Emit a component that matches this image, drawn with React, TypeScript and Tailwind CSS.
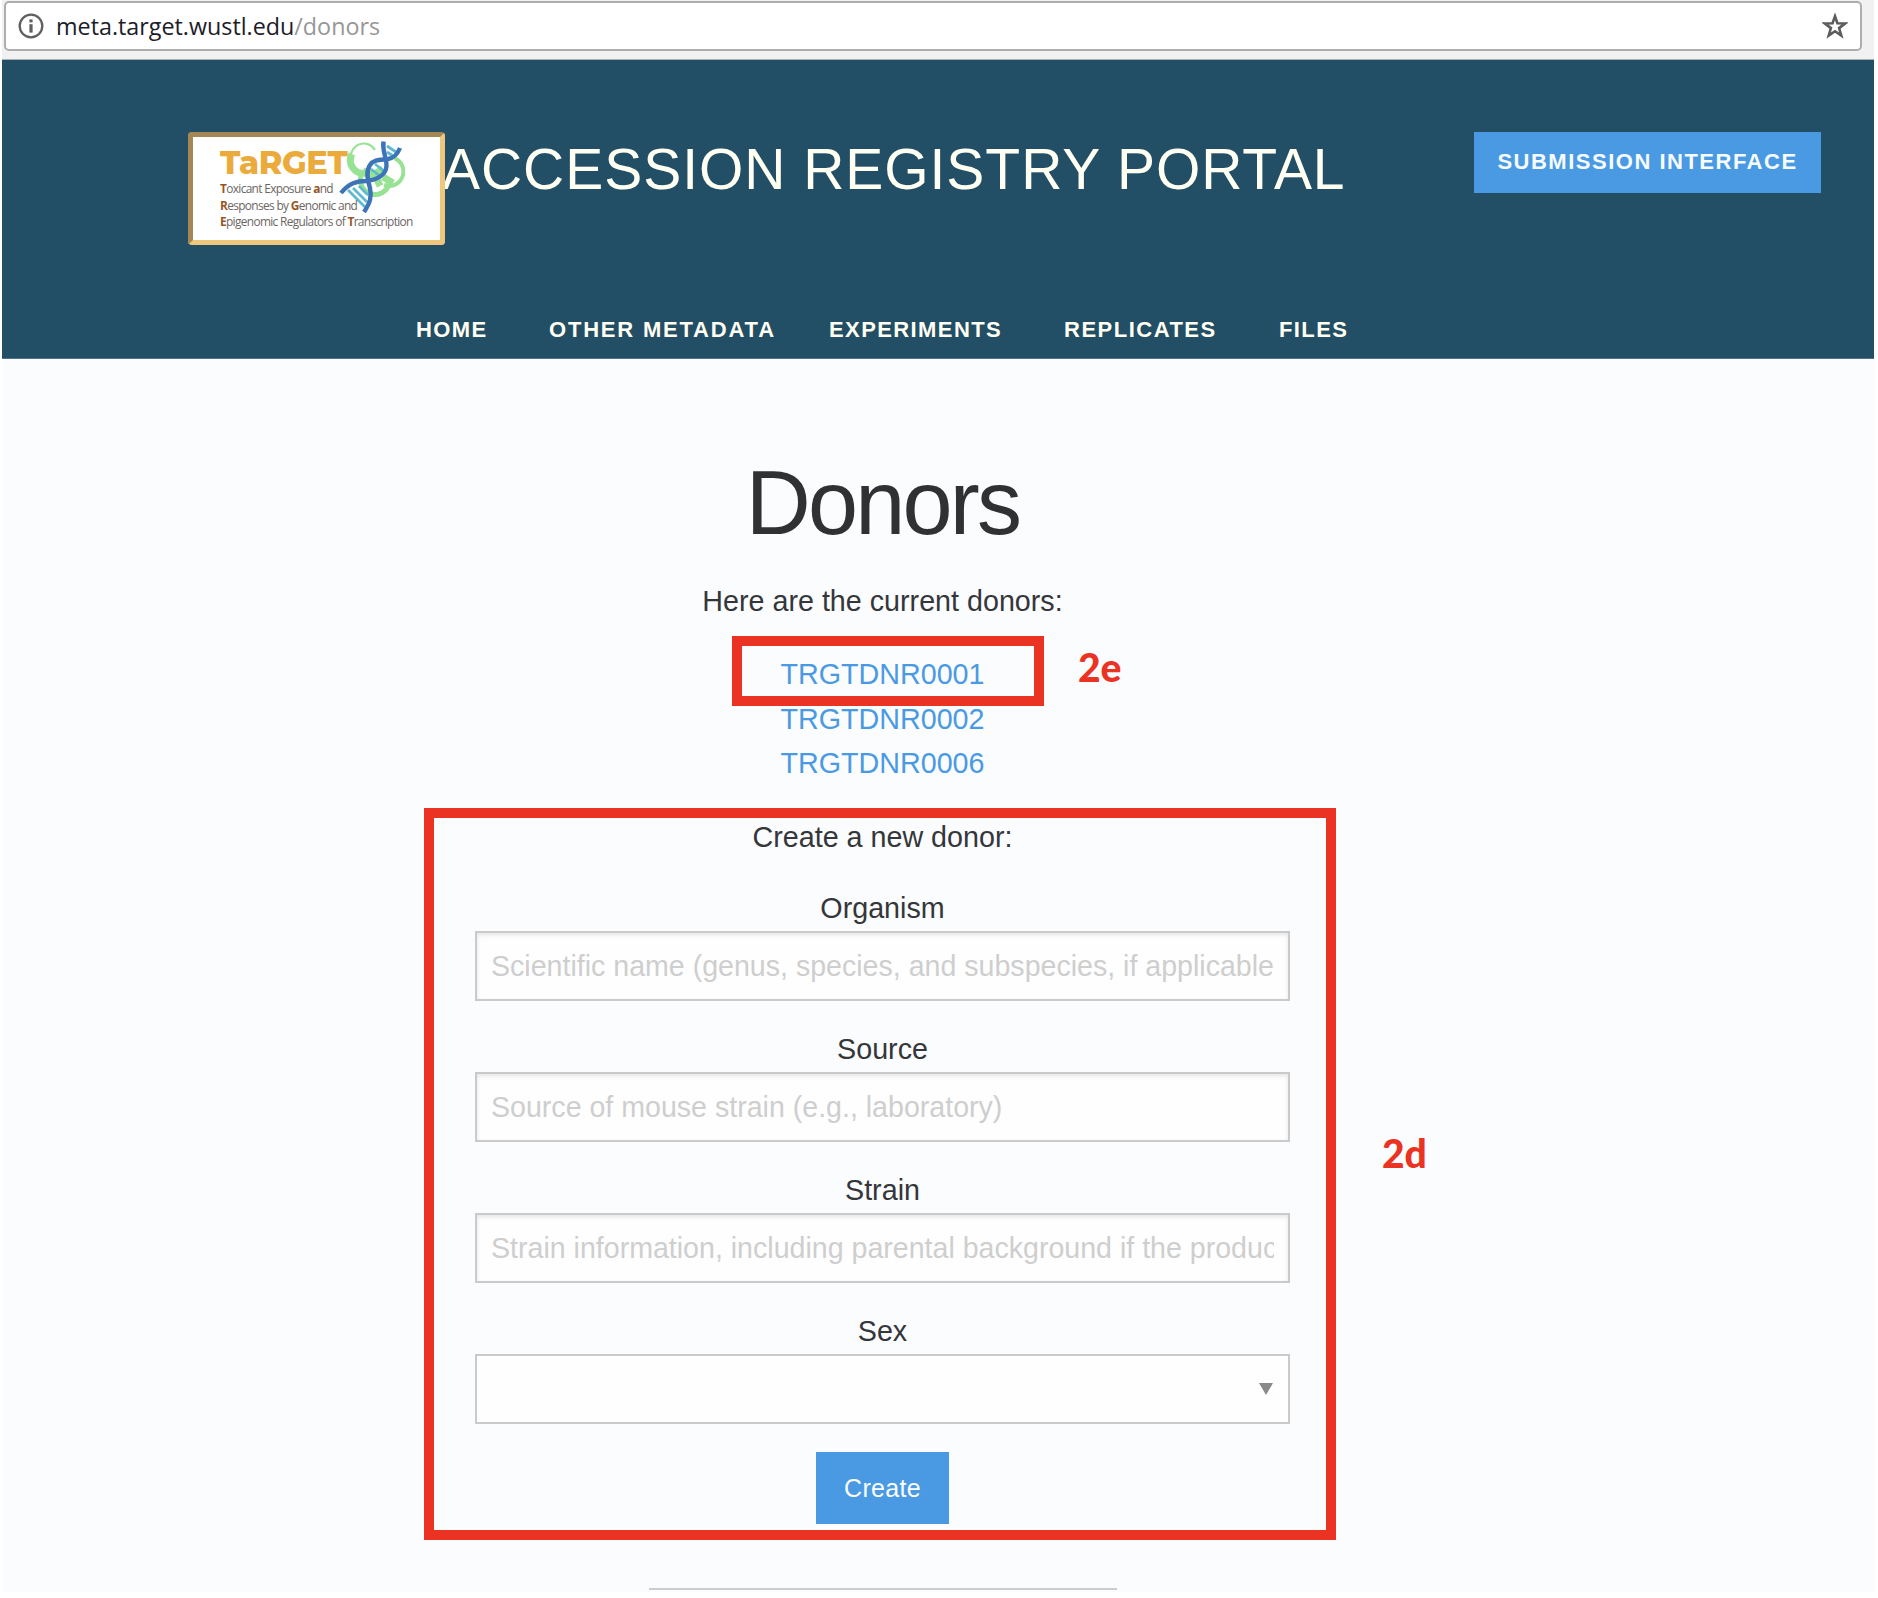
import React from "react";

const navItems = [
  { label: "HOME", style: "w-[133px] tracking-[1.4px]" },
  { label: "OTHER METADATA", style: "w-[280px] tracking-[1.8px]" },
  { label: "EXPERIMENTS", style: "w-[235px] tracking-[1.4px]" },
  { label: "REPLICATES", style: "w-[215px] tracking-[1.5px]" },
  { label: "FILES", style: "w-[80px] tracking-[1.4px]" },
];

const donors = ["TRGTDNR0001", "TRGTDNR0002", "TRGTDNR0006"];

const fields = [
  { label: "Organism", placeholder: "Scientific name (genus, species, and subspecies, if applicable)" },
  { label: "Source", placeholder: "Source of mouse strain (e.g., laboratory)" },
  { label: "Strain", placeholder: "Strain information, including parental background if the product of a cross" },
];

function AddressBar() {
  return (
    <div className="h-[60px] border-b border-[#a9b0b4] bg-[#f1f1f1] pl-[2px] pr-[12px] pt-px">
      <div className="flex h-[50px] items-center rounded-[5px] border-2 border-[#adadad] bg-white pl-[12px] pr-[12px]">
        <svg className="h-[26px] w-[26px] shrink-0" viewBox="0 0 26 26" fill="none">
          <circle cx="13" cy="13" r="11.3" stroke="#5f5f5f" strokeWidth="2.3" />
          <rect x="11.4" y="6.4" width="3.2" height="3" fill="#5f5f5f" />
          <rect x="11.4" y="11.2" width="3.2" height="8.4" fill="#5f5f5f" />
        </svg>
        <div className="ml-[12px] flex-1 whitespace-nowrap font-['Open_Sans',sans-serif] text-[23.3px] leading-[46px] text-[#1c1c2a]">
          meta.target.wustl.edu<span className="text-[#979797]">/donors</span>
        </div>
        <svg className="h-[26px] w-[26px] shrink-0" viewBox="0 0 26 26" fill="none">
          <path
            d="M13 3.2 L15.4 10.2 L23.2 10.4 L17.1 15.1 L19.3 22.6 L13 18.3 L6.7 22.6 L8.9 15.1 L2.8 10.4 L10.6 10.2 Z"
            stroke="#5c5c5c"
            strokeWidth="2.6"
          />
        </svg>
      </div>
    </div>
  );
}

function Initial({ children }: { children: string }) {
  return <b className="text-[#97561f]">{children}</b>;
}

function Logo() {
  return (
    <div className="relative h-[113px] w-[257px] shrink-0 rounded-[4px] border-[5px] border-b-[#efc67e] border-l-[#a58755] border-r-[#efc67e] border-t-[#a58755] bg-white pl-[27px] pt-[9px]">
      <svg className="absolute left-[146px] top-[2px] h-[78px] w-[66px]" viewBox="0 0 66 78" fill="none">
        <g stroke="#98e294">
          <path d="M12 20 A13 13 0 0 1 36 11" strokeWidth="2" />
          <path d="M13 15 A13 13 0 0 0 27 34" strokeWidth="7" />
          <path d="M55 19 A14 14 0 0 1 45 46" strokeWidth="4" />
          <path d="M22 37 A14.5 14.5 0 0 0 50 45" strokeWidth="5" />
          <path d="M24 32 L34 36 L44 30 M37 38 L41 47 M44 38 L54 44" strokeWidth="7" />
        </g>
        <g stroke="#5fb9cf" strokeWidth="2.8">
          <path d="M9 51 L26 68 M14 49 L28 63 M20 47 L29 56 M32 30 L42 38 M36 25 L45 32 M48 7 L57 13 M48 13 L54 17" />
        </g>
        <g stroke="#3d74b8" strokeWidth="4.4">
          <path d="M2 54 C10 44 18 42 27 42 C38 41 47 36 47.5 27 C48 18 43 14 44.5 2.5" />
          <path d="M25 73 C31 64 33 58 31 49 C28 39 27 32 31 26 C35 20 42 21 49 20 C55 19 58 16 61 9" />
        </g>
      </svg>
      <div className="font-['Montserrat','Lato',sans-serif] text-[32px] font-extrabold leading-[34px] tracking-[-0.4px] text-[#ebab3c]">
        TaRGET
      </div>
      <div className="relative whitespace-nowrap font-['Open_Sans',sans-serif] text-[11.9px] leading-[16.6px] tracking-[-0.66px] text-[#6c6663]">
        <div><Initial>T</Initial>oxicant Exposure <Initial>a</Initial>nd</div>
        <div><Initial>R</Initial>esponses by <Initial>G</Initial>enomic and</div>
        <div><Initial>E</Initial>pigenomic Regulators of <Initial>T</Initial>ranscription</div>
      </div>
    </div>
  );
}

function Header() {
  return (
    <header className="h-[299px] border-b border-[#4f7188] bg-[#224e66] text-[#fffff2]">
      <div className="flex h-[237px] items-start pl-[186px] pr-[53px] pt-[72px]">
        <Logo />
        <h1 className="ml-[-3px] mt-[2px] flex-1 whitespace-nowrap text-[57px] leading-[70px] tracking-[0.96px]">
          ACCESSION REGISTRY PORTAL
        </h1>
        <button className="h-[61px] w-[347px] bg-[#4999e3] pb-px text-[22px] font-bold leading-[60px] tracking-[1.5px] text-[#f6fcff]">
          SUBMISSION INTERFACE
        </button>
      </div>
      <nav className="flex whitespace-nowrap pl-[414px] pt-[16px] text-[22px] font-bold leading-[34px]">
        {navItems.map((item) => (
          <a key={item.label} className={item.style}>{item.label}</a>
        ))}
      </nav>
    </header>
  );
}

function DonorForm() {
  return (
    <form className="mt-[29px]">
      <p className="leading-[45px]">Create a new donor:</p>
      <div className="mt-[26px] flex flex-col gap-[26px]">
        {fields.map((field) => (
          <label key={field.label} className="block h-[115px]">
            <span className="block leading-[45px]">{field.label}</span>
            <input
              className="block h-[70px] w-full border-2 border-[#cacaca] bg-[#fefefe] px-[14px] text-[28.6px] tracking-[-0.01px] shadow-[inset_0_2px_4px_rgba(10,10,10,0.1)] placeholder:text-[#cecece]"
              placeholder={field.placeholder}
            />
          </label>
        ))}
        <label className="block h-[115px]">
          <span className="block leading-[45px]">Sex</span>
          <span className="flex h-[70px] items-center justify-end border-2 border-[#cacaca] bg-[#fefefe] pr-[15px]">
            <svg className="h-[12px] w-[14px]" viewBox="0 0 14 12">
              <path d="M0 0 H14 L7 12 Z" fill="#8a8a8a" />
            </svg>
          </span>
        </label>
      </div>
      <button type="button" className="mx-auto mt-[28px] block h-[72px] w-[133px] bg-[#4999e3] text-[25px] leading-[72px] tracking-[0.3px] text-[#fbfdff]">
        Create
      </button>
    </form>
  );
}

export default function App() {
  return (
    <div className="relative h-[1598px] w-[1878px] overflow-hidden bg-white pl-[2px] pr-[4px] font-['Liberation_Sans',Arial,sans-serif]">
      <div className="h-[1592px] bg-[#fafcfe]">
        <AddressBar />
        <Header />
        <main className="ml-[473px] w-[815px] pt-[83px] text-center text-[28.7px] text-[#35363a]">
          <h2 className="text-[90px] leading-[123px] tracking-[-2.8px] text-[#2f3133]">Donors</h2>
          <p className="mt-[14px] leading-[45px]">Here are the current donors:</p>
          <ul className="mt-[28px] text-[#4a9ae3]">
            {donors.map((id) => (
              <li key={id} className="leading-[44.7px]">{id}</li>
            ))}
          </ul>
          <DonorForm />
          <hr className="mx-auto mt-[64px] w-[468px] border-t-2 border-[#cccccc]" />
        </main>
      </div>
      {/* Callouts over the page */}
      <div className="absolute left-[732px] top-[636px] h-[70px] w-[312px] border-[10px] border-[#eb3323]" />
      <div className="absolute left-[1078px] top-[644px] font-['Lato',sans-serif] text-[39px] font-black leading-[46px] text-[#eb3323]">2e</div>
      <div className="absolute left-[424px] top-[808px] h-[732px] w-[912px] border-[10px] border-[#eb3323]" />
      <div className="absolute left-[1382px] top-[1130px] font-['Lato',sans-serif] text-[39px] font-black leading-[46px] text-[#eb3323]">2d</div>
    </div>
  );
}
